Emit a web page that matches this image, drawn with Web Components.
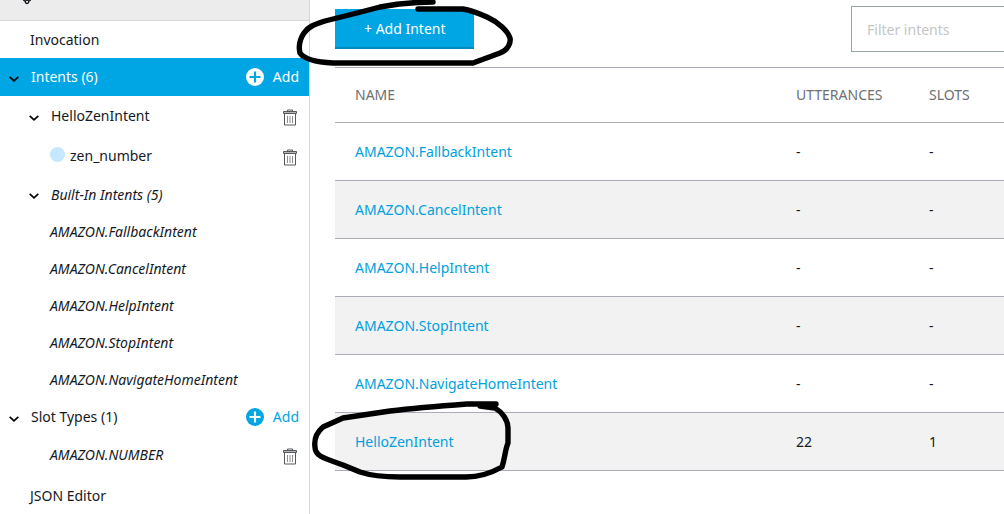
<!DOCTYPE html>
<html lang="en">
<head>
<meta charset="utf-8">
<title>Intents</title>
<style>
html, body { margin: 0; height: 100%; }
body { overflow: hidden; background: #fff; color: #16191f; font: 14px/20px "Noto Sans", "Open Sans", sans-serif; }
</style>
</head>
<body>
<skill-builder></skill-builder>
<script>
const define = (name, html, setup) => {
  const template = document.createElement('template');
  template.innerHTML = html;
  customElements.define(name, class extends HTMLElement {
    constructor() {
      super();
      this.attachShadow({ mode: 'open' }).append(template.content.cloneNode(true));
    }
    connectedCallback() { if (setup) setup(this, this.shadowRoot); }
  });
};

define('trash-button', `
<style>
:host { display: block; }
button { display: block; border: 0; padding: 0; background: none; cursor: pointer; }
svg { display: block; }
</style>
<button aria-label="Delete"><svg width="14" height="17" viewBox="0 0 14 17" fill="none" stroke="#55585c">
<path d="M4.5 2.5v-1.5h5v1.5"/><path d="M0.5 2.5h13v2h-13z" fill="#b4b6b8"/><path d="M1.5 5v11h11V5"/><path d="M4.500 7v7M7 7v7M9.500 7v7" stroke="#8a8c8f"/>
</svg></button>`);

define('add-button', `
<style>
:host { display: block; color: #00a5e4; --hole: #fff; }
button { display: flex; align-items: center; gap: 9px; border: 0; padding: 0; background: none; color: inherit; font: inherit; cursor: pointer; }
svg { display: block; }
</style>
<button><svg width="18" height="18" viewBox="0 0 18 18"><circle cx="9" cy="9" r="9" fill="currentColor"/><path d="M9 3.5v11M3.5 9h11" stroke="var(--hole)" stroke-width="2.2"/></svg><slot></slot></button>`);

define('nav-row', `
<style>
:host { display: flex; align-items: center; box-sizing: border-box; height: 37px; padding: 0 10px 0 30px; }
:host([level="2"]) { padding-left: 50px; }
:host([size="m"]) { height: 38px; }
:host([size="l"]) { height: 40px; }
:host([size="xl"]) { height: 46px; }
:host([italic]) a { font-style: italic; }
:host([active]) { background: #00a5e4; color: #fff; }
a { color: inherit; text-decoration: none; flex: 1; display: flex; align-items: center; gap: 5px; }
.toggle { display: none; border: 0; padding: 0; background: none; width: 10px; margin: 3px 12px 0 -21px; cursor: pointer; color: #000; }
:host([toggle]) .toggle { display: block; }
.toggle svg { display: block; }
.dot { display: none; width: 15px; height: 15px; border-radius: 50%; background: #c5e7ff; margin-bottom: 4px; }
:host([dot]) .dot { display: block; }
::slotted(trash-button) { padding: 3px 2px 0 0; }
</style>
<button class="toggle" aria-label="Toggle section"><svg width="10" height="6" viewBox="0 0 10 6" fill="none" stroke="currentColor" stroke-width="1.7"><path d="M0.7 0.8 5 4.8 9.3 0.8"/></svg></button>
<a href="#"><span class="dot"></span><slot></slot></a><slot name="action"></slot>`);

define('side-nav', `
<style>
:host { display: block; box-sizing: border-box; border-right: 1px solid #d5d8d8; background: #fff; }
header { height: 20px; background: #ececec; border-bottom: 1px solid #d5d8d8; padding-left: 22px; }
header svg { display: block; }
[active] add-button { color: #fff; --hole: #00a5e4; }
</style>
<header><svg width="10" height="5" viewBox="0 0 10 5" fill="none" stroke="#16191f" stroke-width="1.3"><path d="M1.2 0 3.2 1.2M8.800 0 6.800 1.2"/><circle cx="5" cy="1.8" r="1.7"/></svg></header>
<nav aria-label="Interaction model">
<nav-row>Invocation</nav-row>
<nav-row active toggle size="m">Intents (6)<add-button slot="action">Add</add-button></nav-row>
<nav-row level="2" toggle size="l">HelloZenIntent<trash-button slot="action"></trash-button></nav-row>
<nav-row level="2" dot size="l">zen_number<trash-button slot="action"></trash-button></nav-row>
<nav-row level="2" toggle italic>Built-In Intents (5)</nav-row>
<nav-row level="2" italic>AMAZON.FallbackIntent</nav-row>
<nav-row level="2" italic>AMAZON.CancelIntent</nav-row>
<nav-row level="2" italic>AMAZON.HelpIntent</nav-row>
<nav-row level="2" italic>AMAZON.StopIntent</nav-row>
<nav-row level="2" italic>AMAZON.NavigateHomeIntent</nav-row>
<nav-row toggle size="m">Slot Types (1)<add-button slot="action">Add</add-button></nav-row>
<nav-row level="2" italic>AMAZON.NUMBER<trash-button slot="action"></trash-button></nav-row>
<nav-row size="xl">JSON Editor</nav-row>
</nav>`);

define('intent-toolbar', `
<style>
:host { display: flex; justify-content: space-between; align-items: flex-start; padding-bottom: 15px; }
button { height: 40px; margin-top: 3px; padding: 2px 28px 0 29px; border: 0; border-bottom: 2px solid #008bc0; background: #00a5e4; color: #fff; font: inherit; cursor: pointer; }
input { box-sizing: border-box; width: 173px; height: 46px; padding: 0 15px; border: 1px solid #95a5a6; border-radius: 0; background: #fff; color: inherit; font: inherit; }
input::placeholder { color: #c4c6c6; opacity: 1; }
</style>
<button>+ Add Intent</button>
<input type="text" placeholder="Filter intents" aria-label="Filter intents">`);

define('intent-table', `
<style>
:host { display: block; }
table { width: 100%; border-collapse: separate; border-spacing: 0; table-layout: fixed; border-top: 1px solid #aaacb8; }
th, td { box-sizing: border-box; height: 58px; padding: 0 20px; border-bottom: 1px solid #aaacb8; text-align: left; font-weight: 400; }
th { height: 55px; color: #6e7072; }
th:nth-child(2) { width: 133px; }
th:nth-child(3) { width: 115px; }
tbody tr:nth-child(even) { background: #f2f2f2; }
a { color: #00a1dd; text-decoration: none; }
</style>
<table><thead><tr><th scope="col">NAME</th><th scope="col">UTTERANCES</th><th scope="col">SLOTS</th></tr></thead><tbody></tbody></table>`,
(host, root) => {
  const rows = [
    ['AMAZON.FallbackIntent', '-', '-'],
    ['AMAZON.CancelIntent', '-', '-'],
    ['AMAZON.HelpIntent', '-', '-'],
    ['AMAZON.StopIntent', '-', '-'],
    ['AMAZON.NavigateHomeIntent', '-', '-'],
    ['HelloZenIntent', '22', '1']
  ];
  root.querySelector('tbody').innerHTML = rows.map(([name, utterances, slots]) =>
    `<tr><td><a href="#">${name}</a></td><td>${utterances}</td><td>${slots}</td></tr>`).join('');
});

define('ink-marks', `
<style>
:host { display: block; position: absolute; left: 0; top: 0; pointer-events: none; }
svg { display: block; }
</style>
<svg width="520" height="490" viewBox="0 0 520 490" fill="none" stroke="#000" stroke-width="5.4" stroke-linecap="round" stroke-linejoin="round" aria-hidden="true">
<path d="M433 2 418 2.5C404 3 390 5 380 7L357 13 325 21C313 25 308 27 304 33 300 39 298 45 300 53 304 59 315 62 333 63L473 63 500 53C508 50 511 43 510 38 508 31 498 22 487 17 478 13 470 10 463 9L418 9"/>
<path d="M496 404 467 404C440 406 415 408 390 411L343 418 323 427C316 433 314 440 315 447 315 455 320 457 343 465L360 472C375 477 390 477 400 477L466 477C481 477 493 472 502 467 505 458 505 450 508 443L508 428C508 420 502 412 495 408L480 406 495 405"/>
</svg>`);

define('skill-builder', `
<style>
:host { display: grid; grid-template-columns: 310px minmax(0, 1fr); min-height: 100vh; position: relative; }
main { padding: 6px 0 0 25px; margin-right: -20px; }
</style>
<side-nav></side-nav>
<main><intent-toolbar></intent-toolbar><intent-table></intent-table></main>
<ink-marks></ink-marks>`);
</script>
</body>
</html>
